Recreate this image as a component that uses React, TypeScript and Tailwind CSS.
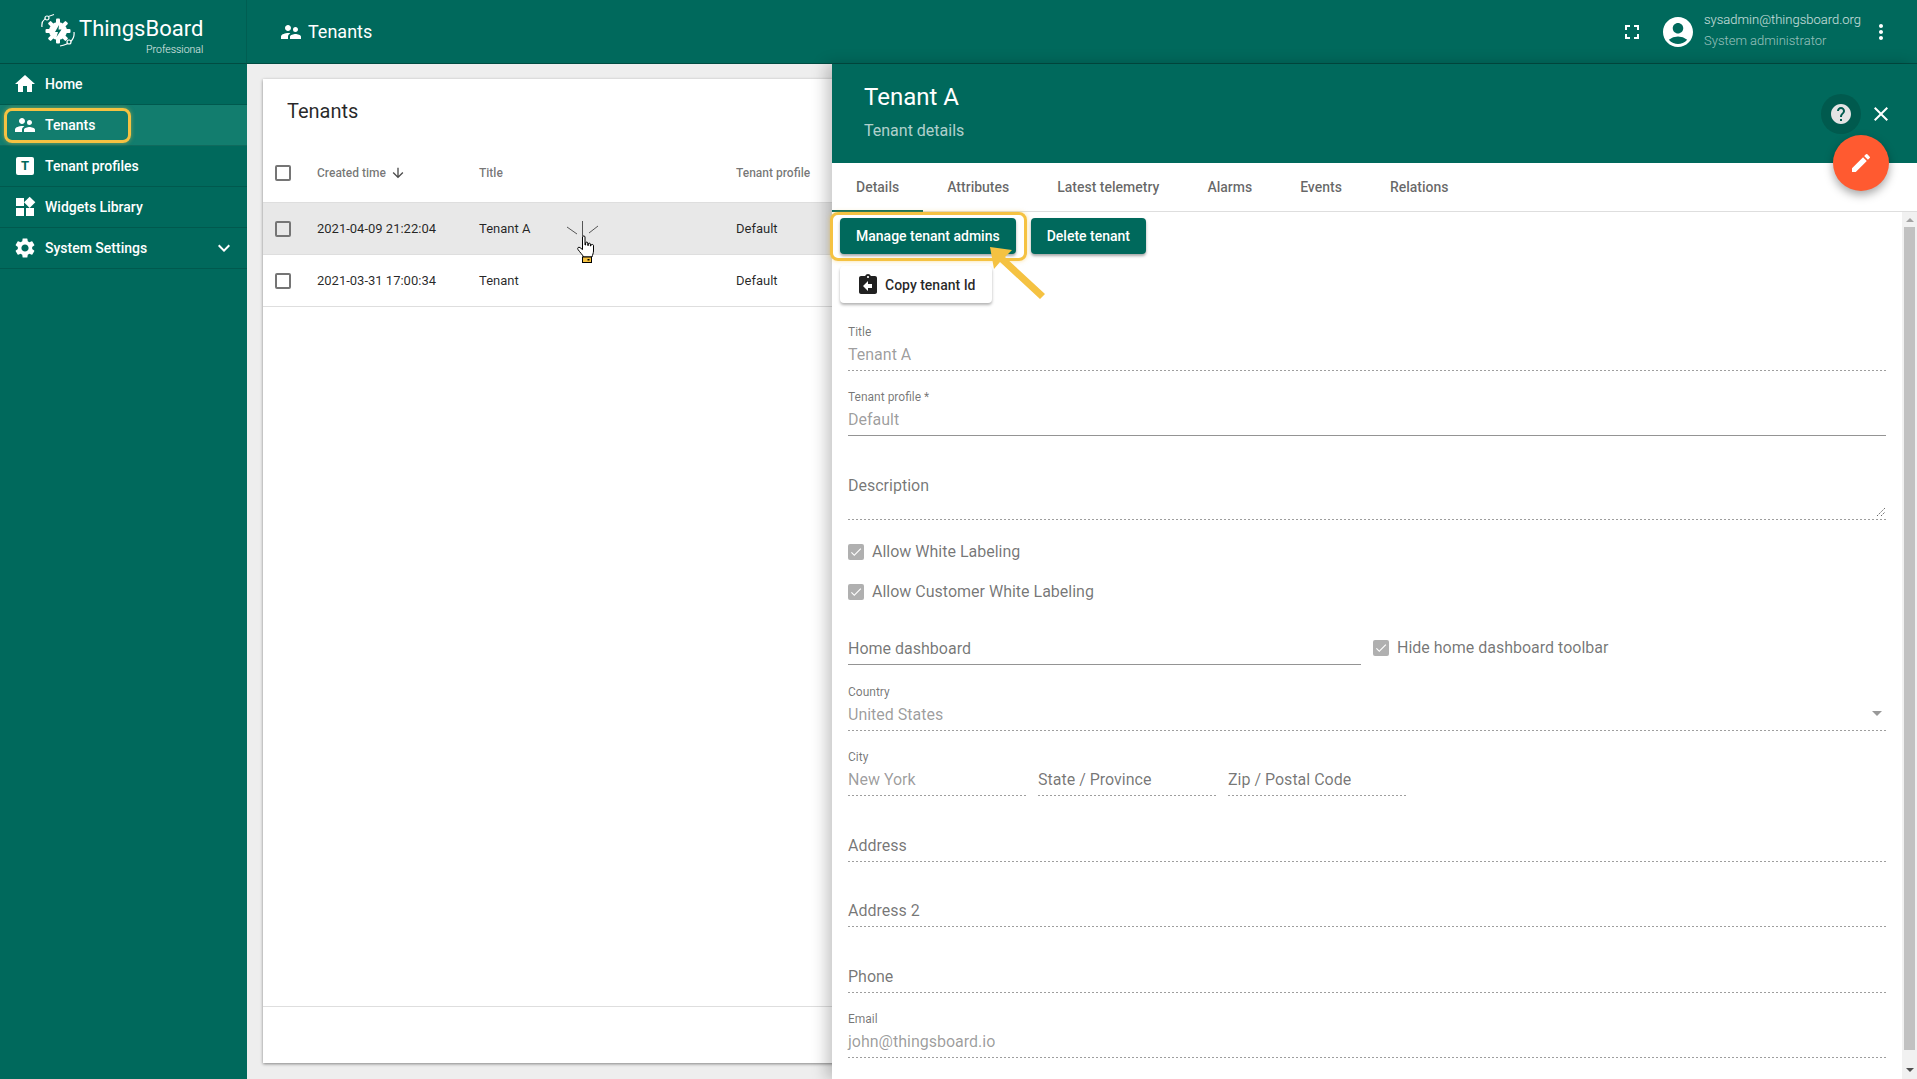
import {
  MdHome,
  MdSupervisorAccount,
  MdWidgets,
  MdSettings,
  MdExpandMore,
  MdFullscreen,
  MdAccountCircle,
  MdMoreVert,
  MdHelp,
  MdClose,
  MdEdit,
  MdArrowDownward,
  MdAssignmentReturn,
  MdCheck,
} from "react-icons/md";

const Logo = () => (
  <svg width="36" height="36" viewBox="0 0 36 36" className="shrink-0" fill="none">
    <path d="M2 14 C1 8 4 4 14 1.5" stroke="white" strokeWidth="1.2" />
    <circle cx="7" cy="5" r="2" stroke="white" strokeWidth="1.2" fill="#00695c" />
    <path d="M34 19 C35 27 30 31 20 33" stroke="white" strokeWidth="1.2" />
    <circle cx="29" cy="29" r="2" stroke="white" strokeWidth="1.2" fill="#00695c" />
    <g fill="white">
      <circle cx="18" cy="18" r="9" />
      <rect x="16" y="5.5" width="4" height="25" rx="1" />
      <rect x="5.5" y="16" width="25" height="4" rx="1" />
      <rect x="16" y="5.5" width="4" height="25" rx="1" transform="rotate(45 18 18)" />
      <rect x="16" y="5.5" width="4" height="25" rx="1" transform="rotate(-45 18 18)" />
    </g>
    <path d="M19 12 L15 19 L18 19 L16.5 24 L21.5 16.5 L18.5 16.5 Z" fill="#00695c" />
  </svg>
);

const Hand = () => (
  <svg width="18" height="28" viewBox="0 0 18 28" className="absolute left-[577px] top-[235px]">
    <path
      d="M5.5 2 C5.5 .6 8 .6 8 2 V10 H8.6 V8 C8.6 6.8 10.8 6.8 10.8 8 V10.5 H11.3 V9 C11.3 7.9 13.4 7.9 13.4 9 V11 H13.9 V10.2 C13.9 9.2 16.5 9.2 16.5 10.4 V16 C16.5 18 15.5 20 15 22 H6.5 C5.5 19.5 3 17.5 1 14.5 C0 13 1.6 11.5 3 12.6 L5.5 14.6 Z"
      fill="white"
      stroke="black"
      strokeWidth="1"
    />
    <rect x="5.5" y="22" width="9" height="5.5" fill="#f5c242" stroke="black" strokeWidth="1" />
    <rect x="10.5" y="24" width="2" height="1.5" fill="black" />
  </svg>
);

const Check = ({ on = false }: { on?: boolean }) =>
  on ? (
    <span className="w-4 h-4 bg-[#b0b0b0] rounded-[2px] flex items-center justify-center shrink-0">
      <MdCheck className="text-white text-[14px]" />
    </span>
  ) : (
    <span className="block w-4 h-4 border-2 border-[#757575] rounded-[2px] shrink-0" />
  );

const Dots = () => (
  <div className="h-px w-full bg-[linear-gradient(to_right,#9e9e9e_50%,transparent_50%)] bg-[length:4px_1px]" />
);

const Field = ({
  label,
  value,
  placeholder,
  solid,
  className = "h-[65px]",
}: {
  label?: string;
  value?: string;
  placeholder?: string;
  solid?: boolean;
  className?: string;
}) => (
  <div className={`flex flex-col justify-end ${className}`}>
    {label && <div className="h-4 leading-4 text-xs text-black/55 mb-[3px]">{label}</div>}
    <div className={`h-6 leading-6 text-base ${value ? "text-black/40" : "text-black/55"}`}>
      {value || placeholder}
    </div>
    <div className="mt-[3px]">{solid ? <div className="h-px w-full bg-[#949494]" /> : <Dots />}</div>
  </div>
);

const navItems = [
  { label: "Home", icon: <MdHome className="text-[24px]" /> },
  { label: "Tenants", icon: <MdSupervisorAccount className="text-[24px]" />, active: true },
  {
    label: "Tenant profiles",
    icon: (
      <span className="w-[18px] h-[18px] mx-[3px] bg-white rounded-[2px] flex items-center justify-center text-[#00695c] text-[13px] font-bold">
        T
      </span>
    ),
  },
  { label: "Widgets Library", icon: <MdWidgets className="text-[24px]" /> },
  { label: "System Settings", icon: <MdSettings className="text-[24px]" />, chevron: true },
];

const rows = [
  { time: "2021-04-09 21:22:04", title: "Tenant A", hover: true },
  { time: "2021-03-31 17:00:34", title: "Tenant" },
];

const tabs = ["Details", "Attributes", "Latest telemetry", "Alarms", "Events", "Relations"];

export default function App() {
  return (
    <div className="relative h-screen w-screen overflow-hidden flex flex-col bg-[#eeeeee] font-['Roboto',sans-serif]">
      {/* Top bar */}
      <header className="h-16 shrink-0 flex bg-[#00695c] text-white border-b border-[#004c42]">
        <div className="w-[247px] shrink-0 pl-10 pt-[13px] flex gap-[3px] border-r border-black/10">
          <Logo />
          <div className="flex flex-col items-end mt-[6px]">
            <span className="text-[22px] leading-[20px]">ThingsBoard</span>
            <span className="text-[10.5px] leading-[11px] mt-[5px] font-light text-white/90">Professional</span>
          </div>
        </div>
        <div className="flex-1 flex items-center pl-[32px]">
          <MdSupervisorAccount className="text-[24px] mr-[5px]" />
          <span className="text-[18px]">Tenants</span>
        </div>
        <div className="flex items-center">
          <MdFullscreen className="text-[24px] mr-3" />
          <MdAccountCircle className="text-[36px] mr-2 ml-1" />
          <div className="flex flex-col w-[165px] text-[13px] font-light">
            <span className="leading-5 text-white/80 mt-[-3px]">sysadmin@thingsboard.org</span>
            <span className="leading-5 text-white/60 mt-px">System administrator</span>
          </div>
          <MdMoreVert className="text-[24px] mr-6" />
        </div>
      </header>

      <div className="flex-1 flex min-h-0">
        {/* Sidebar */}
        <nav className="w-[247px] shrink-0 bg-[#00695c] text-white text-sm font-medium">
          {navItems.map((item) => (
            <div
              key={item.label}
              className={`relative h-[41px] flex items-center pl-[13px] gap-2 border-b border-black/15 ${
                item.active ? "bg-[#127d6e]" : ""
              }`}
            >
              {item.icon}
              <span className="flex-1">{item.label}</span>
              {item.chevron && <MdExpandMore className="text-[24px] mr-[11px]" />}
              {item.active && (
                <span className="absolute left-1 top-[3px] w-[127px] h-[35px] rounded-lg border-[3px] border-[#f5c242] shadow-[0_0_4px_rgba(245,194,66,0.5)]" />
              )}
            </div>
          ))}
        </nav>

        {/* Tenants table */}
        <main className="w-[585px] shrink-0 pl-4 pt-[15px] pb-4 overflow-hidden">
          <div className="w-[600px] h-full bg-white flex flex-col shadow-[0_1px_3px_rgba(0,0,0,0.45)]">
            <div className="h-16 shrink-0 flex items-center pl-6 text-[20px] text-black/85">Tenants</div>
            <div className="h-[60px] shrink-0 flex items-center pl-3 text-xs font-medium text-black/55 border-b border-[#dedede]">
              <div className="w-[42px]">
                <Check />
              </div>
              <div className="w-[162px] flex items-center gap-1">
                Created time <MdArrowDownward className="text-[16px] text-black/70" />
              </div>
              <div className="w-[257px]">Title</div>
              <div>Tenant profile</div>
            </div>
            {rows.map((r) => (
              <div
                key={r.time}
                className={`h-[52px] shrink-0 flex items-center pl-3 text-[13px] text-black/85 border-b border-[#dedede] ${
                  r.hover ? "bg-[#e8e8e8]" : ""
                }`}
              >
                <div className="w-[42px]">
                  <Check />
                </div>
                <div className="w-[162px]">{r.time}</div>
                <div className="w-[257px]">{r.title}</div>
                <div>Default</div>
              </div>
            ))}
            <div className="flex-1" />
            <div className="h-[57px] shrink-0 border-t border-[#dedede]" />
          </div>
        </main>

        {/* Details panel */}
        <aside className="flex-1 flex flex-col bg-white min-w-0 shadow-[-6px_0_14px_rgba(0,0,0,0.22)] z-10">
          <div className="h-[99px] shrink-0 bg-[#00695c] text-white pl-[32px] pr-6 flex justify-between">
            <div>
              <div className="text-[24px] leading-8 mt-[17px]">Tenant A</div>
              <div className="text-base leading-6 mt-[6px] text-white/70">Tenant details</div>
            </div>
            <div className="flex items-center mt-[1px]">
              <span className="w-10 h-10 rounded-full bg-[#005a4e] flex items-center justify-center">
                <MdHelp className="text-[24px] text-[#e4e4e4]" />
              </span>
              <MdClose className="text-[24px] ml-2" />
            </div>
          </div>
          <div className="h-[49px] shrink-0 flex border-b border-[#dedede] text-sm font-medium text-black/60">
            {tabs.map((t, i) => (
              <div
                key={t}
                className={`px-6 flex items-center border-b-2 h-[49px] ${i === 0 ? "border-[#00695c]" : "border-transparent"}`}
              >
                {t}
              </div>
            ))}
          </div>
          <div className="flex-1 flex min-h-0">
            <div className="flex-1 min-w-0 pl-4 pr-4 overflow-hidden">
              <div className="pt-[6px] -ml-2 flex gap-[15px]">
                <button className="h-9 px-4 bg-[#00695c] text-white text-sm font-medium rounded shadow-[0_2px_3px_rgba(0,0,0,0.35)]">
                  Manage tenant admins
                </button>
                <button className="h-9 px-4 bg-[#00695c] text-white text-sm font-medium rounded shadow-[0_2px_3px_rgba(0,0,0,0.35)]">
                  Delete tenant
                </button>
              </div>
              <div className="mt-3 -ml-2">
                <button className="h-[37px] px-4 bg-white text-black/85 text-sm font-medium rounded flex items-center gap-[5px] shadow-[0_2px_3px_rgba(0,0,0,0.3)]">
                  <MdAssignmentReturn className="text-[24px] text-[#212121]" />
                  Copy tenant Id
                </button>
              </div>
              <Field label="Title" value="Tenant A" className="h-[68px]" />
              <Field label="Tenant profile *" value="Default" solid />
              <div className="relative">
                <Field placeholder="Description" className="h-[84px] [&>div:nth-child(1)]:mb-[18px]" />
                <svg width="10" height="10" viewBox="0 0 10 10" className="absolute right-0 bottom-[3px]" stroke="#666" strokeWidth="1" strokeDasharray="1.5 1">
                  <path d="M1 9 L9 1 M5 9 L9 5" />
                </svg>
              </div>
              <div className="h-[40px] mt-3 flex items-center gap-2 text-base text-black/55">
                <Check on />
                Allow White Labeling
              </div>
              <div className="h-[40px] flex items-center gap-2 text-base text-black/55">
                <Check on />
                Allow Customer White Labeling
              </div>
              <div className="flex gap-3 h-[52px]">
                <div className="w-[513px]">
                  <Field placeholder="Home dashboard" solid className="h-[53px]" />
                </div>
                <div className="flex items-center gap-2 text-base text-black/55 h-6 mt-6">
                  <Check on />
                  Hide home dashboard toolbar
                </div>
              </div>
              <div className="relative">
                <Field label="Country" value="United States" className="h-[67px]" />
                <span className="absolute right-[4px] bottom-[15px] w-0 h-0 border-x-[5px] border-x-transparent border-t-[5px] border-t-black/40" />
              </div>
              <div className="flex gap-3">
                <div className="w-[178px]">
                  <Field label="City" value="New York" />
                </div>
                <div className="w-[178px]">
                  <Field placeholder="State / Province" />
                </div>
                <div className="w-[178px]">
                  <Field placeholder="Zip / Postal Code" />
                </div>
              </div>
              <Field placeholder="Address" className="h-[66px]" />
              <Field placeholder="Address 2" />
              <Field placeholder="Phone" className="h-[66px]" />
              <Field label="Email" value="john@thingsboard.io" />
            </div>
            {/* Scrollbar */}
            <div className="w-[15px] shrink-0 bg-[#f1f1f1] flex flex-col items-center">
              <span className="mt-[6px] w-0 h-0 border-x-[4px] border-x-transparent border-b-[4px] border-b-[#a3a3a3]" />
              <div className="mt-[5px] w-[11px] h-[823px] bg-[#c1c1c1]" />
              <span className="mt-[18px] w-0 h-0 border-x-[4px] border-x-transparent border-t-[4px] border-t-[#505050]" />
            </div>
          </div>
        </aside>
      </div>

      {/* Overlays: FAB, tutorial highlight, arrow and click cursor */}
      <span className="absolute left-[1833px] top-[135px] z-20 w-14 h-14 rounded-full bg-[#ff5a30] flex items-center justify-center text-white shadow-[0_4px_10px_rgba(0,0,0,0.35)]">
        <MdEdit className="text-[24px]" />
      </span>
      <span className="absolute left-[830px] top-[212px] z-20 w-[197px] h-[49px] rounded-lg border-[3px] border-[#f5c242] shadow-[0_0_4px_rgba(245,194,66,0.5)]" />
      <svg width="62" height="58" viewBox="0 0 62 58" className="absolute left-[988px] top-[244px] z-20" fill="#f5c242">
        <path d="M2 3 L24 6 L17 13 L57 50 L52 55 L12 18 L6 25 Z" />
      </svg>
      <svg width="34" height="18" viewBox="0 0 34 18" className="absolute left-[566px] top-[220px]" stroke="#555" strokeWidth="1">
        <path d="M16.5 1 V16 M1 7 L11 14 M32 6 L23 13" />
      </svg>
      <Hand />
    </div>
  );
}
